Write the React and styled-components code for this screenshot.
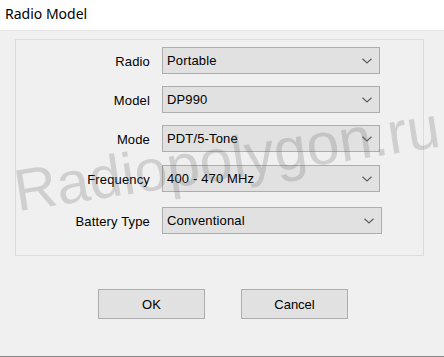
import React from 'react'
import styled, { createGlobalStyle } from 'styled-components';

const Global = createGlobalStyle`
  html, body {
    margin: 0;
    padding: 0;
    background: #f0f0f0;
  }
`;

const Window = styled.div`
  position: relative;
  width: 444px;
  height: 357px;
  box-sizing: border-box;
  display: flex;
  flex-direction: column;
  background: #f0f0f0;
  border-bottom: 1px solid #858585;
  overflow: hidden;
  font-family: "Liberation Sans", Arial, sans-serif;
`;

const TitleBar = styled.div`
  height: 31px;
  background: #ffffff;
  border-bottom: 1px solid #e6e6e6;
  display: flex;
  align-items: center;
  padding-left: 5px;
  padding-bottom: 4px;
  box-sizing: border-box;
  font-family: "Noto Sans", "Open Sans", sans-serif;
  font-size: 14px;
  color: #000;
`;

const Panel = styled.div`
  margin: 8px 20px 0 15px;
  height: 217px;
  box-sizing: border-box;
  border: 1px solid #dcdcdc;
  background: #f0f0f0;
  padding-top: 7px;
  display: flex;
  flex-direction: column;
`;

const Row = styled.div`
  display: flex;
  align-items: center;
  margin-top: ${p => p.$mt || 0}px;
`;

const Label = styled.div`
  width: 134px;
  text-align: right;
  font-size: 13px;
  letter-spacing: 0.15px;
  color: #000;
  padding-top: 2px;
`;

const Select = styled.div`
  margin-left: 12px;
  width: ${p => p.$w || 218}px;
  height: 27px;
  box-sizing: border-box;
  border: 1px solid #adadad;
  background: #e1e1e1;
  display: flex;
  align-items: center;
  justify-content: space-between;
  padding: 0 7px 0 4px;
  font-size: 13px;
  letter-spacing: 0.15px;
  color: #000;
`;

const ButtonBar = styled.div`
  display: flex;
  gap: 36px;
  padding-left: 98px;
  margin-top: 33px;
`;

const Button = styled.div`
  width: 107px;
  height: 30px;
  box-sizing: border-box;
  border: 1px solid #adadad;
  background: #e1e1e1;
  display: flex;
  align-items: center;
  justify-content: center;
  font-size: 13px;
  color: #000;
`;

const Watermark = styled.div`
  position: absolute;
  left: 12px;
  top: 130px;
  font-family: "Liberation Sans", Arial, sans-serif;
  font-size: 59px;
  line-height: 1;
  white-space: nowrap;
  color: rgba(100, 100, 100, 0.23);
  transform: rotate(-8.7deg);
  transform-origin: center;
  pointer-events: none;
`;

function Chevron() {
  return (
    <svg width="10" height="6" viewBox="0 0 10 6">
      <polyline points="0.5,0.8 5,5 9.5,0.8" fill="none" stroke="#5f5f5f" strokeWidth="1.2" />
    </svg>
  )
}

const fields = [
  { label: 'Radio', value: 'Portable', mt: 0 },
  { label: 'Model', value: 'DP990', mt: 12 },
  { label: 'Mode', value: 'PDT/5-Tone', mt: 12 },
  { label: 'Frequency', value: '400 - 470 MHz', mt: 13 },
  { label: 'Battery Type', value: 'Conventional', mt: 15, w: 220 },
];

export default function App() {
  return (
    <>
      <Global />
      <Window>
        <TitleBar>Radio Model</TitleBar>
        <Panel>
          {fields.map(f => (
            <Row key={f.label} $mt={f.mt}>
              <Label>{f.label}</Label>
              <Select $w={f.w}>
                <span>{f.value}</span>
                <Chevron />
              </Select>
            </Row>
          ))}
        </Panel>
        <ButtonBar>
          <Button>OK</Button>
          <Button>Cancel</Button>
        </ButtonBar>
        <Watermark>Radiopolygon.ru</Watermark>
      </Window>
    </>
  )
}
